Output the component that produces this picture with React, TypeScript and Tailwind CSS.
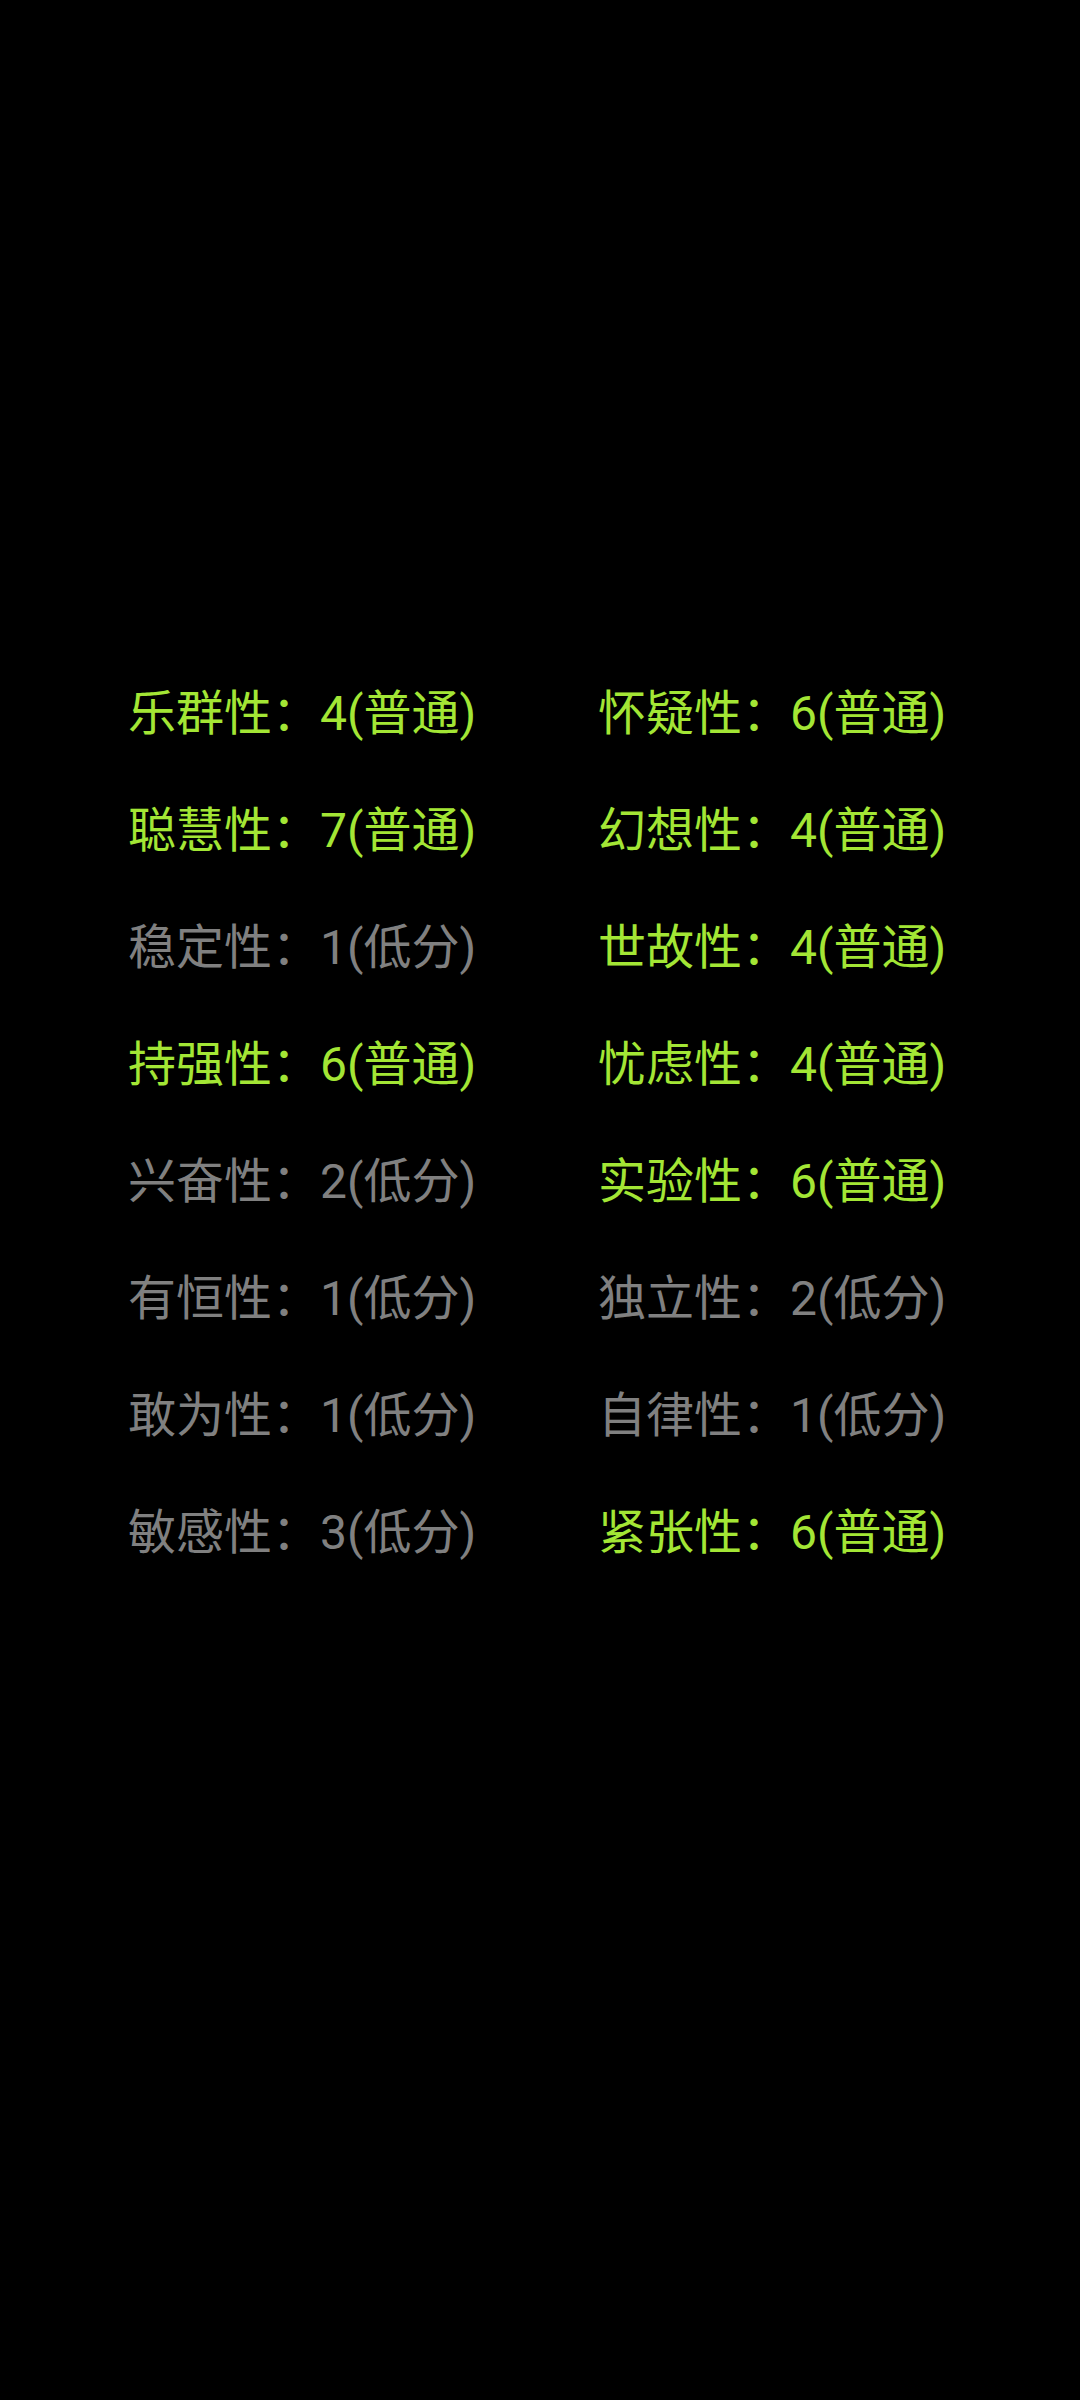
import React from "react";

const rows: [string, string, boolean][][] = [
  [["乐群性", "4(普通)", true], ["怀疑性", "6(普通)", true]],
  [["聪慧性", "7(普通)", true], ["幻想性", "4(普通)", true]],
  [["稳定性", "1(低分)", false], ["世故性", "4(普通)", true]],
  [["持强性", "6(普通)", true], ["忧虑性", "4(普通)", true]],
  [["兴奋性", "2(低分)", false], ["实验性", "6(普通)", true]],
  [["有恒性", "1(低分)", false], ["独立性", "2(低分)", false]],
  [["敢为性", "1(低分)", false], ["自律性", "1(低分)", false]],
  [["敏感性", "3(低分)", false], ["紧张性", "6(普通)", true]],
];

export default function App() {
  return (
    <div
      className="w-[1080px] h-[2400px] bg-black pt-[655px] pl-[128px]"
      style={{ fontFamily: "Roboto, 'Noto Sans CJK SC', sans-serif" }}
    >
      <div className="grid grid-cols-[470px_1fr]">
        {rows.flat().map(([name, val, hi], i) => (
          <div
            key={i}
            className={`h-[117px] flex items-center text-[48px] leading-none whitespace-nowrap ${
              hi ? "text-[#a3e635]" : "text-[#808080]"
            }`}
          >
            {name}：{val}
          </div>
        ))}
      </div>
    </div>
  );
}
